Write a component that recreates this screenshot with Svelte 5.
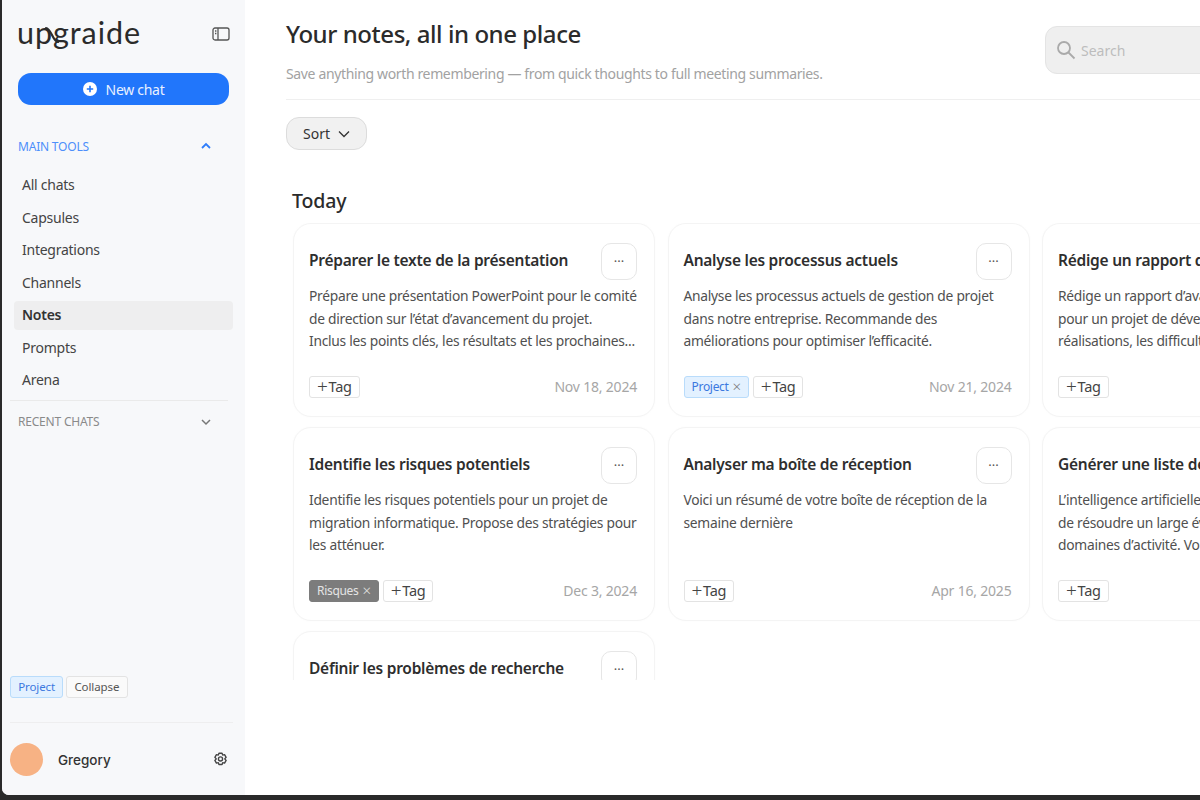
<script>
  const nav = ['All chats', 'Capsules', 'Integrations', 'Channels', 'Notes', 'Prompts', 'Arena'];
  const cards = [
    { t: 'Préparer le texte de la présentation', b: ['Prépare une présentation PowerPoint pour le comité', 'de direction sur l’état d’avancement du projet.', 'Inclus les points clés, les résultats et les prochaines...'], d: 'Nov 18, 2024' },
    { t: 'Analyse les processus actuels', b: ['Analyse les processus actuels de gestion de projet', 'dans notre entreprise. Recommande des', 'améliorations pour optimiser l’efficacité.'], d: 'Nov 21, 2024', tag: 'Project', kind: 'blue' },
    { t: 'Rédige un rapport d’avancement', b: ['Rédige un rapport d’avancement détaillé', 'pour un projet de développement, incluant', 'réalisations, les difficultés et les étapes'], d: '' },
    { t: 'Identifie les risques potentiels', b: ['Identifie les risques potentiels pour un projet de', 'migration informatique. Propose des stratégies pour', 'les atténuer.'], d: 'Dec 3, 2024', tag: 'Risques', kind: 'grey' },
    { t: 'Analyser ma boîte de réception', b: ['Voici un résumé de votre boîte de réception de la', 'semaine dernière'], d: 'Apr 16, 2025' },
    { t: 'Générer une liste de cas d’usage', b: ['L’intelligence artificielle permet aujourd’hui', 'de résoudre un large éventail de problèmes', 'domaines d’activité. Voici quelques exemples'], d: '' },
    { t: 'Définir les problèmes de recherche', b: ['Définis les problèmes de recherche à étudier.'], d: '' }
  ];
</script>

<div class="screen">
  <div class="window">
    <aside class="side">
      <div class="brand">
        <span class="logo">upgraide
          <svg class="wave" width="14" height="18" viewBox="0 0 14 18" fill="none" stroke="#2b2b2b" stroke-width="2.200" stroke-linecap="round"><path d="M1 2c5 0 7 14 12 14"/></svg>
        </span>
        <svg class="panel" width="18" height="14" viewBox="0 0 18 14" fill="none" stroke="#555" stroke-width="1.300"><rect x="1" y="1" width="16" height="12" rx="2"/><path d="M6 1v12"/><path d="M3 4h1.400M3 6.500h1.400" /></svg>
      </div>
      <button class="new">
        <svg width="14" height="14" viewBox="0 0 14 14"><circle cx="7" cy="7" r="7" fill="#fff"/><path d="M7 3.800v6.400M3.800 7h6.400" stroke="#2176fb" stroke-width="1.600"/></svg>
        New chat
      </button>
      <div class="sec first">
        <span>MAIN TOOLS</span>
        <svg width="12" height="8" viewBox="0 0 12 8" fill="none" stroke="#2f7dfb" stroke-width="1.800"><path d="M2 6l4-4 4 4"/></svg>
      </div>
      <nav>
        {#each nav as n}
          <div class="item" class:on={n === 'Notes'}>{n}</div>
        {/each}
      </nav>
      <div class="sec second">
        <span>RECENT CHATS</span>
        <svg width="12" height="8" viewBox="0 0 12 8" fill="none" stroke="#777" stroke-width="1.500"><path d="M2 2l4 4 4-4"/></svg>
      </div>
      <div class="grow"></div>
      <div class="chips">
        <span class="chip blue">Project</span>
        <span class="chip plain">Collapse</span>
      </div>
      <div class="user">
        <span class="avatar"></span>
        <span class="name">Gregory</span>
        <svg width="15" height="15" viewBox="0 0 24 24" fill="none" stroke="#444" stroke-width="2.200" stroke-linejoin="round"><path d="M9.500 2h5l1 3 3-.8 2.500 4.300-2.200 2.500 2.200 2.500-2.500 4.300-3-.8-1 3h-5l-1-3-3 .8L3 13.500 5.200 11 3 8.500l2.500-4.300 3 .8z"/><circle cx="12" cy="11" r="3.300"/></svg>
      </div>
    </aside>
    <main class="main">
      <header class="head">
        <div class="titles">
          <h1>Your notes, all in one place</h1>
          <p>Save anything worth remembering — from quick thoughts to full meeting summaries.</p>
        </div>
        <div class="search">
          <svg width="20" height="20" viewBox="0 0 20 20" fill="none" stroke="#aaa" stroke-width="1.800"><circle cx="8" cy="8" r="6"/><path d="M12.500 12.500l6 6"/></svg>
          <span>Search</span>
        </div>
      </header>
      <div class="tools">
        <button class="sort">Sort
          <svg width="12" height="8" viewBox="0 0 12 8" fill="none" stroke="#333" stroke-width="1.300"><path d="M1 1.500l5 5 5-5"/></svg>
        </button>
      </div>
      <h2>Today</h2>
      <div class="scroll">
        <div class="grid">
          {#each cards as c}
            <article class="card">
              <div class="top">
                <h3>{c.t}</h3>
                <button class="more">···</button>
              </div>
              <div class="body">
                {#each c.b as line}
                  <div class="line">{line}</div>
                {/each}
              </div>
              <div class="foot">
                {#if c.tag}
                  <span class="tag {c.kind}">{c.tag}<i>×</i></span>
                {/if}
                <span class="add"><b>+</b>Tag</span>
                <span class="date">{c.d}</span>
              </div>
            </article>
          {/each}
        </div>
      </div>
    </main>
  </div>
</div>

<style>
  :global(body) { margin: 0; }
  .screen {
    width: 1200px; height: 800px; overflow: hidden; background: #2a2a2a;
    padding: 0 0 5px 2px; box-sizing: border-box;
    font-family: "Noto Sans", "Open Sans", sans-serif; color: #333;
  }
  .window { display: flex; height: 100%; background: #fff; border-bottom-left-radius: 7px; overflow: hidden; }
  .side {
    width: 243px; flex: none; background: #f7f8fa; display: flex; flex-direction: column;
    box-sizing: border-box; padding: 0 12px 0 8px;
  }
  .brand { display: flex; align-items: center; justify-content: space-between; height: 66px; padding: 0 3px 0 7px; }
  .logo { font: 400 30.500px/1 Lato, sans-serif; color: #2b2b2b; letter-spacing: 0.95px; position: relative; top: -1px; }
  .wave { position: absolute; left: 28px; top: 9px; }
  .panel { margin-top: 1px; }
  .new {
    height: 32px; margin: 7px 4px 0 8px; border: 0; border-radius: 13px; background: #2176fb; color: #e9f1ff;
    display: flex; align-items: center; justify-content: center; gap: 9px;
    font: 14px "Noto Sans", sans-serif; letter-spacing: -0.3px;
  }
  .sec { display: flex; align-items: center; justify-content: space-between; font-size: 12px; letter-spacing: -0.2px; padding: 0 21px 0 8px; }
  .sec.first { color: #4d8ffb; margin-top: 33px; height: 16px; }
  .sec.second { color: #8a8a8a; height: 16px; margin: 5px 5px 0 0; border-top: 1px solid #eaeaea; padding: 13px 16px 0 8px; }
  nav { margin-top: 17px; display: flex; flex-direction: column; gap: 4px; margin-left: 4px; }
  .item { height: 28.500px; line-height: 28.500px; padding-left: 8px; font-size: 14px; letter-spacing: -0.25px; color: #444; border-radius: 4px; }
  .item.on { background: #eeeeef; font-weight: 600; color: #333; }
  .grow { flex: 1; }
  .chips { display: flex; gap: 3px; }
  .chip { height: 20px; line-height: 20px; font-size: 11.500px; letter-spacing: -0.1px; padding: 0 7.200px; border-radius: 3px; }
  .chip.blue { background: #e3f1ff; border: 1px solid #b9dcfb; color: #3b78e0; }
  .chip.plain { background: #fafafa; border: 1px solid #e3e3e3; color: #555; }
  .user { display: flex; align-items: center; margin-top: 24px; border-top: 1px solid #eeeeef; padding: 20px 5px 19px 0; }
  .avatar { width: 33px; height: 33px; border-radius: 50%; background: #f7b284; flex: none; }
  .name { font: 500 13.500px Inter, sans-serif; margin-left: 15px; flex: 1; color: #333; }
  .main { flex: 1; min-width: 0; padding-left: 41px; display: flex; flex-direction: column; }
  .head { display: flex; justify-content: space-between; height: 100px; box-sizing: border-box; border-bottom: 1px solid #efefef; }
  .titles { padding-top: 18px; }
  h1 { margin: 0; font-size: 24px; line-height: 32px; font-weight: 500; color: #2b2b2b; letter-spacing: -0.44px; }
  .titles p { margin: 15px 0 0; font-size: 14px; line-height: 18px; color: #a2a2a2; letter-spacing: -0.36px; }
  .search {
    width: 220px; height: 48px; margin: 26px -65px 0 0; flex: none; box-sizing: border-box;
    background: #efefef; border: 1px solid #e4e4e4; border-radius: 12px; display: flex; align-items: center; gap: 5px;
    padding-left: 10px; color: #bdbdbd; font-size: 14px;
  }
  .tools { margin-top: 17px; }
  .sort {
    width: 81px; height: 33px; border: 1px solid #dcdcdc; border-radius: 13px; background: #f1f1f1;
    display: flex; align-items: center; justify-content: center; gap: 8px;
    font: 14px "Noto Sans", sans-serif; color: #333;
  }
  h2 { margin: 37px 0 0 6px; font-size: 19.500px; line-height: 28px; font-weight: 500; color: #2b2b2b; letter-spacing: -0.1px; }
  .scroll { height: 457px; margin: 8px -70px 0 0; overflow: hidden; padding-left: 7px; }
  .grid { display: grid; grid-template-columns: repeat(3, 362px); gap: 10px 12.500px; }
  .card {
    height: 194px; box-sizing: border-box; background: #fff; border: 1px solid #f4f4f4; border-radius: 18px;
    padding: 19px 17px 18.500px 15px; display: flex; flex-direction: column;
    box-shadow: 0 0 3px rgba(0,0,0,0.02);
  }
  .top { display: flex; align-items: center; justify-content: space-between; height: 36px; }
  h3 { margin: 0; font-size: 15.500px; font-weight: 600; color: #2e2e2e; letter-spacing: -0.25px; white-space: nowrap; position: relative; top: -1px; }
  .more { width: 36px; height: 37px; flex: none; background: #fff; border: 1px solid #e6e6e6; border-radius: 10px; color: #555; font-size: 13px; padding: 0; font-family: "Noto Sans", sans-serif; }
  .body { margin: 6px 0 0; font-size: 13.800px; line-height: 22.500px; color: #505050; letter-spacing: -0.27px; flex: 1; }
  .line { white-space: nowrap; }
  .foot { display: flex; align-items: center; gap: 4px; height: 22px; }
  .add { height: 20px; line-height: 19px; padding: 0 7px; border: 1px solid #e3e3e3; border-radius: 3px; font-size: 14.500px; color: #444; letter-spacing: -0.3px; }
  .add b { font-weight: 300; font-size: 19px; margin-right: 1px; line-height: 1; vertical-align: -1px; }
  .tag { height: 20px; line-height: 20px; padding: 0 7px; border-radius: 3px; font-size: 12px; letter-spacing: -0.3px; }
  .tag i { font-style: normal; font-size: 15px; font-weight: 300; margin-left: 4px; line-height: 1; vertical-align: -1px; }
  .tag.blue { background: #e3f1ff; border: 1px solid #b9dcfb; color: #3b78e0; }
  .tag.blue i { color: #777; }
  .tag.grey { background: #7c7c7c; border: 1px solid #7c7c7c; color: #e4e4e4; }
  .date { margin-left: auto; font-size: 14px; color: #a6a6a6; letter-spacing: -0.2px; }
</style>
